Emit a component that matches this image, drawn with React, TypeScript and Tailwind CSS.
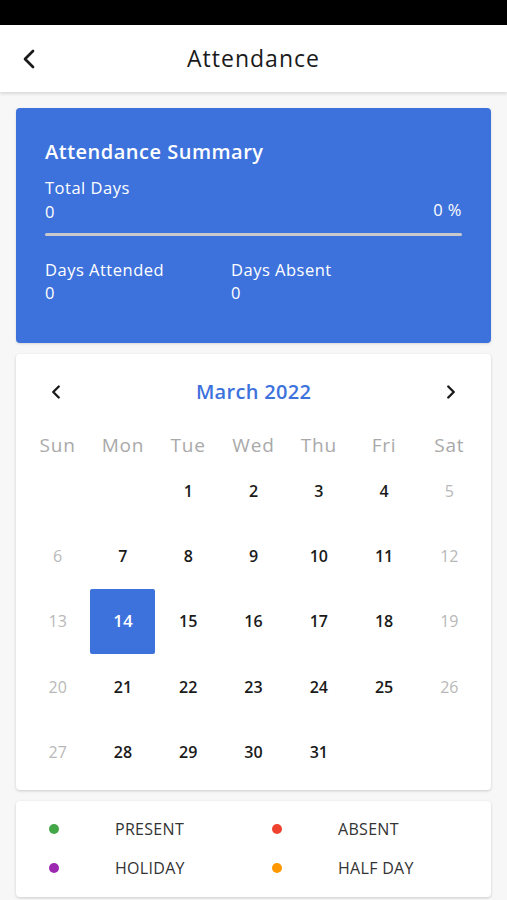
import { ChevronLeft, ChevronRight } from "lucide-react";

const font = { fontFamily: '"Open Sans", "Noto Sans", sans-serif' };

const days = ["Sun", "Mon", "Tue", "Wed", "Thu", "Fri", "Sat"];

// March 2022 starts on a Tuesday
const cells: (number | null)[] = [null, null, ...Array.from({ length: 31 }, (_, i) => i + 1)];

const legend = [
  { label: "PRESENT", color: "bg-[#43a647]" },
  { label: "ABSENT", color: "bg-[#f0432f]" },
  { label: "HOLIDAY", color: "bg-[#9c27b0]" },
  { label: "HALF DAY", color: "bg-[#ff9800]" },
];

export default function App() {
  return (
    <div className="flex min-h-[900px] w-[507px] flex-col bg-[#f7f7f7] text-[#1a1a1a]" style={font}>
      <div className="h-[25px] bg-black" />
      <header className="relative flex h-[67px] items-center justify-center bg-white shadow-[0_2px_3px_rgba(0,0,0,0.12)]">
        <ChevronLeft className="absolute left-[13px] h-[32px] w-[32px] text-[#1a1a1a]" strokeWidth={2} />
        <h1 className="text-[23px] tracking-[1px]">Attendance</h1>
      </header>

      <div className="flex flex-col gap-[11px] px-4 pt-[16px]">
        <section className="rounded-[4px] bg-[#3d72dc] px-[29px] pb-[39px] pt-[30px] text-white shadow-sm">
          <h2 className="text-[20px] font-semibold leading-[28px] tracking-[0.5px]">Attendance Summary</h2>
          <div className="mt-[11px] text-[16.5px] leading-[22px] tracking-[0.5px]">Total Days</div>
          <div className="flex items-end justify-between text-[16.5px] leading-[22px] tracking-[0.5px]">
            <span>0</span>
            <span className="pb-[2px]">0 %</span>
          </div>
          <div className="mt-[10px] h-[3px] rounded-full bg-[#c9c9cc]" />
          <div className="mt-[22px] flex text-[16.5px] leading-[23px] tracking-[0.5px]">
            <div className="w-[186px]">
              <div>Days Attended</div>
              <div>0</div>
            </div>
            <div>
              <div>Days Absent</div>
              <div>0</div>
            </div>
          </div>
        </section>

        <section className="rounded-[4px] bg-white px-[9px] pb-[6px] pt-[23px] shadow-[0_1px_3px_rgba(0,0,0,0.18)]">
          <div className="flex items-center justify-between px-[20px]">
            <ChevronLeft className="h-[22px] w-[22px] text-[#1a1a1a]" strokeWidth={2.6} />
            <span className="text-[20px] font-semibold tracking-[0.3px] text-[#3d72dc]">March 2022</span>
            <ChevronRight className="h-[22px] w-[22px] text-[#1a1a1a]" strokeWidth={2.6} />
          </div>
          <div className="mt-[25px] grid grid-cols-7">
            {days.map((d) => (
              <div key={d} className="text-center text-[19px] leading-[26px] tracking-[0.8px] text-[#a9a9a9]">
                {d}
              </div>
            ))}
          </div>
          <div className="grid grid-cols-7">
            {cells.map((n, i) => {
              const weekend = i % 7 === 0 || i % 7 === 6;
              const selected = n === 14;
              return (
                <div key={i} className="flex h-[65.3px] items-center justify-center">
                  {n !== null && (
                    <div
                      className={
                        selected
                          ? "flex h-[65px] w-[65px] items-center justify-center rounded-[2px] bg-[#3d72dc] text-[17px] font-semibold text-white"
                          : weekend
                            ? "text-[16px] text-[#b8b8b8]"
                            : "text-[16px] font-semibold text-[#1a1a1a]"
                      }
                    >
                      {n}
                    </div>
                  )}
                </div>
              );
            })}
          </div>
        </section>

        <section className="grid grid-cols-[223px_1fr] gap-y-[17px] rounded-[4px] bg-white px-[33px] pb-[18px] pt-[17px] shadow-[0_1px_3px_rgba(0,0,0,0.18)]">
          {legend.map((l) => (
            <div key={l.label} className="flex h-[22px] items-center">
              <span className={`h-[10px] w-[10px] rounded-full ${l.color}`} />
              <span className="ml-[56px] text-[16px] tracking-[0.3px] text-[#333]">{l.label}</span>
            </div>
          ))}
        </section>
      </div>
    </div>
  );
}
